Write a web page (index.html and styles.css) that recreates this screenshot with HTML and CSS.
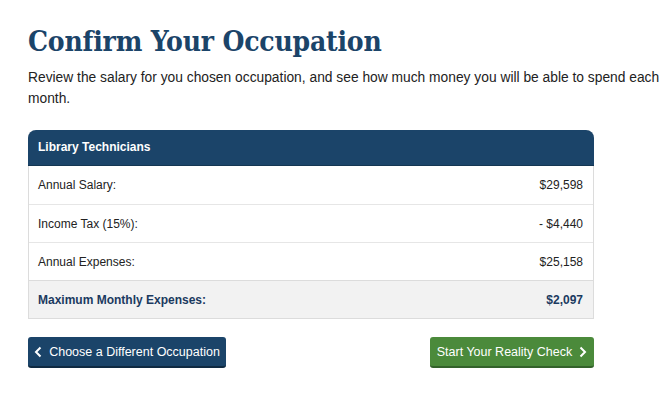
FILE: index.html
```html
<!DOCTYPE html>
<html lang="en">
<head>
    <meta charset="UTF-8">
    <meta name="viewport" content="width=device-width, initial-scale=1.0">
    <title>Confirm Your Occupation</title>
    <link rel="stylesheet" href="styles.css">
</head>
<body>

<div class="page">
    <h1>Confirm Your Occupation</h1>
    <p class="intro">Review the salary for you chosen occupation, and see how much money you will be able to spend each month.</p>

    <div class="summary">
        <div class="summaryHead">Library Technicians</div>
        <div class="row">
            <span>Annual Salary:</span>
            <span>$29,598</span>
        </div>
        <div class="row">
            <span>Income Tax (15%):</span>
            <span>- $4,440</span>
        </div>
        <div class="row">
            <span>Annual Expenses:</span>
            <span>$25,158</span>
        </div>
        <div class="row total">
            <span>Maximum Monthly Expenses:</span>
            <span>$2,097</span>
        </div>
    </div>

    <div class="actions">
        <button class="btn btnBack">
            <svg class="chev" width="8" height="12" viewBox="0 0 8 12"><path d="M6.5 1.5 L2 6 L6.5 10.5" fill="none" stroke="#fff" stroke-width="2"/></svg>
            Choose a Different Occupation
        </button>
        <button class="btn btnNext">
            Start Your Reality Check
            <svg class="chev" width="8" height="12" viewBox="0 0 8 12"><path d="M1.5 1.5 L6 6 L1.5 10.5" fill="none" stroke="#fff" stroke-width="2"/></svg>
        </button>
    </div>
</div>

</body>
</html>
```

FILE: styles.css
```css
/* Global Styles */
body {
    margin: 0;
    padding: 0;
    background: #fff;
    font-family: 'Liberation Sans', Arial, sans-serif;
    color: #222;
}

.page {
    padding: 23px 0 0 28px;
}

h1 {
    font-family: 'DejaVu Serif Condensed', 'DejaVu Serif', serif;
    font-weight: bold;
    font-size: 28px;
    letter-spacing: -0.2px;
    color: #1b4469;
    margin: 0 0 6px 0;
    line-height: 38px;
}

.intro {
    font-size: 13.8px;
    line-height: 21px;
    margin: 0 0 21px 0;
    width: 642px;
}

/* Salary table */
.summary {
    width: 564px;
    border: 1px solid #dcdcdc;
    border-top: none;
    border-radius: 8px 8px 0 0;
}

.summaryHead {
    background: #1b4469;
    color: #fff;
    font-weight: bold;
    font-size: 12px;
    height: 35px;
    line-height: 35px;
    padding: 0 10px;
    border-radius: 8px 8px 0 0;
    margin: 0 -1px;
    border-bottom: 1px solid #143652;
}

.row {
    display: flex;
    justify-content: space-between;
    align-items: center;
    height: 37px;
    padding: 0 10px 0 9px;
    font-size: 12px;
    border-top: 1px solid #e6e6e6;
}

.summaryHead + .row {
    border-top: none;
    height: 38px;
}

.row.total {
    background: #f2f2f2;
    color: #1b3a60;
    font-weight: bold;
    border-top: 1px solid #dcdcdc;
}

/* Buttons */
.actions {
    display: flex;
    justify-content: space-between;
    width: 566px;
    margin-top: 18px;
}

.btn {
    display: flex;
    align-items: center;
    justify-content: center;
    gap: 7px;
    white-space: nowrap;
    font-family: 'Liberation Sans', Arial, sans-serif;
    font-size: 12.5px;
    color: #fff;
    height: 31px;
    padding: 0 8px;
    border: none;
    border-radius: 3px;
    cursor: pointer;
}

.chev {
    flex: none;
}

.btnBack {
    background: #1b4469;
    border-bottom: 2px solid #0f2a42;
    width: 198px;
}

.btnNext {
    background: #4b8a3b;
    border-bottom: 2px solid #33622a;
    width: 164px;
}
```
